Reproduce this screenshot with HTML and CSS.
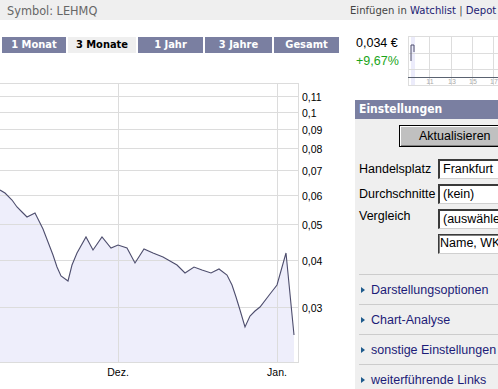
FILE: index.html
```html
<!DOCTYPE html>
<html lang="de">
<head>
<meta charset="utf-8">
<title>LEHMQ Chart</title>
<link rel="stylesheet" href="styles.css">
</head>
<body>
<div class="topbar">
  <div class="sym">Symbol: LEHMQ</div>
  <div class="tools">Einfügen in <a class="lnk">Watchlist</a> | <a class="lnk">Depot</a> | <a class="lnk">Liste</a></div>
</div>
<div class="main">
  <div class="left">
    <div class="tabs">
      <span class="tab t1">1 Monat</span>
      <span class="tab t2 active">3 Monate</span>
      <span class="tab t3">1 Jahr</span>
      <span class="tab t4">3 Jahre</span>
      <span class="tab t5">Gesamt</span>
    </div>
    <svg class="chart" width="340" height="329" viewBox="0 60 340 329" xmlns="http://www.w3.org/2000/svg">
      <polygon class="area" points="0,190 5,193 12,200 17,207 22,212 27,217 35,213 38,219 43,229 48,242 53,255 57,267 61,276 68,281 72,265 77,253 86,237 93,250 102,237 111,248 118,245 127,248 135,263 144,249 153,253 163,257 170,261 177,265 185,273 194,267 202,270 211,273 219,269 227,275 232,285 236,297 240,310 245,327 250,316 255,311 260,307 270,294 277,285 286,253 294,335 294,362 0,362"/>
      <g class="grid">
        <line x1="0" y1="83.5" x2="298" y2="83.5"/>
        <line x1="0" y1="96.5" x2="298" y2="96.5"/>
        <line x1="0" y1="112.5" x2="298" y2="112.5"/>
        <line x1="0" y1="129.5" x2="298" y2="129.5"/>
        <line x1="0" y1="148.5" x2="298" y2="148.5"/>
        <line x1="0" y1="170.5" x2="298" y2="170.5"/>
        <line x1="0" y1="195.5" x2="298" y2="195.5"/>
        <line x1="0" y1="224.5" x2="298" y2="224.5"/>
        <line x1="0" y1="260.5" x2="298" y2="260.5"/>
        <line x1="0" y1="307.5" x2="298" y2="307.5"/>
        <line x1="0" y1="362.5" x2="298" y2="362.5"/>
        <line x1="118.5" y1="83" x2="118.5" y2="363"/>
        <line x1="277.5" y1="83" x2="277.5" y2="363"/>
        <line x1="298.5" y1="83" x2="298.5" y2="363"/>
      </g>
      <polyline class="price" points="0,190 5,193 12,200 17,207 22,212 27,217 35,213 38,219 43,229 48,242 53,255 57,267 61,276 68,281 72,265 77,253 86,237 93,250 102,237 111,248 118,245 127,248 135,263 144,249 153,253 163,257 170,261 177,265 185,273 194,267 202,270 211,273 219,269 227,275 232,285 236,297 240,310 245,327 250,316 255,311 260,307 270,294 277,285 286,253 294,335"/>
      <g class="ylab">
        <text x="302" y="101">0,11</text>
        <text x="302" y="117">0,1</text>
        <text x="302" y="134">0,09</text>
        <text x="302" y="153">0,08</text>
        <text x="302" y="175">0,07</text>
        <text x="302" y="200">0,06</text>
        <text x="302" y="229">0,05</text>
        <text x="302" y="265">0,04</text>
        <text x="302" y="312">0,03</text>
      </g>
      <g class="xlab">
        <text x="118" y="376">Dez.</text>
        <text x="277" y="376">Jan.</text>
      </g>
    </svg>
  </div>
  <div class="right">
    <div class="quote">
      <div class="pricebox">
        <div class="last">0,034 €</div>
        <div class="chg">+9,67%</div>
      </div>
      <svg class="mini" width="100" height="50" viewBox="408 36 100 50" xmlns="http://www.w3.org/2000/svg">
        <rect class="band" x="411" y="37" width="4" height="48"/>
        <g class="mgrid">
          <line x1="408" y1="36.5" x2="508" y2="36.5"/>
          <line x1="408" y1="53.5" x2="508" y2="53.5"/>
          <line x1="408" y1="69.5" x2="508" y2="69.5"/>
          <line x1="408" y1="85.5" x2="508" y2="85.5"/>
          <line x1="408.5" y1="36" x2="408.5" y2="86"/>
          <line x1="429.5" y1="36" x2="429.5" y2="86"/>
          <line x1="451.5" y1="36" x2="451.5" y2="86"/>
          <line x1="472.5" y1="36" x2="472.5" y2="86"/>
          <line x1="493.5" y1="36" x2="493.5" y2="86"/>
        </g>
        <line class="maxis" x1="408" y1="77.5" x2="508" y2="77.5"/>
        <polyline class="mline" points="411,61 411,45 414,45 414,52"/>
        <g class="mlab">
          <text x="430" y="84">11</text>
          <text x="452" y="84">13</text>
          <text x="473" y="84">15</text>
          <text x="494" y="84">17</text>
        </g>
      </svg>
    </div>
    <div class="panel">
      <div class="panel-head">Einstellungen</div>
      <div class="panel-body">
        <div class="btnrow"><span class="btn">Aktualisieren</span></div>
        <div class="form">
          <span class="lbl">Handelsplatz</span><span class="box">Frankfurt</span>
          <span class="lbl">Durchschnitte</span><span class="box">(kein)</span>
          <span class="lbl top">Vergleich</span><span class="box">(auswählen)</span>
          <span class="lbl"></span><span class="box input">Name, WKN</span>
        </div>
        <ul class="links">
          <li class="item"><span class="tri"></span><span class="ltxt">Darstellungsoptionen</span></li>
          <li class="item"><span class="tri"></span><span class="ltxt">Chart-Analyse</span></li>
          <li class="item"><span class="tri"></span><span class="ltxt">sonstige Einstellungen</span></li>
          <li class="item"><span class="tri"></span><span class="ltxt">weiterführende Links</span></li>
        </ul>
      </div>
    </div>
  </div>
</div>
</body>
</html>
```
FILE: styles.css
```css
html, body {
  margin: 0;
  padding: 0;
}
body {
  width: 498px;
  height: 389px;
  overflow: hidden;
  background: #ffffff;
  font-family: "Liberation Sans", Arial, sans-serif;
  color: #000;
}
.topbar {
  display: flex;
  height: 20px;
  background: #efefef;
  font-family: "DejaVu Sans Condensed", "DejaVu Sans", sans-serif;
  font-stretch: condensed;
  white-space: nowrap;
}
.sym {
  flex: none;
  width: 343px;
  padding-left: 7px;
  font-size: 12.6px;
  line-height: 20px;
  padding-top: 1px;
  color: #666;
}
.tools {
  flex: none;
  font-size: 11.2px;
  line-height: 20px;
  padding-top: 1px;
  color: #444;
}
.lnk {
  color: #1c1c72;
  text-decoration: none;
}
.main {
  display: flex;
  align-items: flex-start;
}
.left {
  flex: none;
  width: 355px;
}
.tabs {
  display: flex;
  gap: 2px;
  margin-top: 17px;
  margin-left: 2px;
  height: 16px;
}
.tab {
  flex: none;
  height: 16px;
  line-height: 16px;
  text-align: center;
  background: #7a7fa1;
  color: #fff;
  font-family: "DejaVu Sans Condensed", "DejaVu Sans", sans-serif;
  font-stretch: condensed;
  font-weight: bold;
  font-size: 11px;
}
.tab.active {
  background: #efefef;
  color: #000;
}
.t1 { width: 64px; }
.t2 { width: 68px; }
.t3 { width: 65px; }
.t4 { width: 67px; }
.t5 { width: 65px; }
.chart {
  display: block;
  margin-top: 7px;
}
.area {
  fill: #eeeefb;
  stroke: none;
}
.grid line {
  stroke: #dcdcdc;
  stroke-width: 1;
}
.price {
  fill: none;
  stroke: #4d4d6d;
  stroke-width: 1.1;
}
.ylab text, .xlab text {
  font-family: "Liberation Sans", Arial, sans-serif;
  font-size: 10.5px;
  fill: #000;
}
.xlab text {
  text-anchor: middle;
}
.right {
  flex: none;
  width: 200px;
}
.quote {
  display: flex;
  margin-top: 16px;
  height: 50px;
}
.pricebox {
  flex: none;
  width: 52px;
  padding-left: 1px;
  font-size: 12.5px;
}
.last {
  line-height: 15px;
}
.chg {
  line-height: 15px;
  margin-top: 3px;
  color: #1aa51a;
}
.mini {
  display: block;
  flex: none;
}
.band { fill: #ececfb; }
.mgrid line { stroke: #dddddd; stroke-width: 1; }
.maxis { stroke: #5a6270; stroke-width: 1; }
.mline { fill: none; stroke: #4d4d6d; stroke-width: 1; }
.mlab text {
  font-family: "Liberation Sans", Arial, sans-serif;
  font-size: 7px;
  fill: #aaa;
  text-anchor: middle;
}
.panel {
  margin-top: 14px;
  width: 180px;
}
.panel-head {
  height: 19px;
  line-height: 19px;
  background: #7a7fa1;
  color: #fff;
  padding-left: 4px;
  font-family: "DejaVu Sans Condensed", "DejaVu Sans", sans-serif;
  font-stretch: condensed;
  font-weight: bold;
  font-size: 12px;
}
.panel-body {
  background: #efefef;
  height: 280px;
  padding-top: 6px;
  font-size: 12.5px;
}
.btnrow {
  padding-left: 44px;
}
.btn {
  display: block;
  width: 100px;
  height: 20px;
  line-height: 20px;
  padding-left: 19px;
  background: #c0c0c0;
  border: 1px solid #000;
  box-shadow: inset 1px 1px #ffffff, inset -1px -1px #808080;
  color: #000;
}
.form {
  display: grid;
  grid-template-columns: 79px 110px;
  row-gap: 5px;
  margin-top: 12px;
  padding-left: 4px;
}
.lbl {
  display: flex;
  align-items: center;
  height: 20px;
}
.lbl.top {
  align-items: flex-start;
}
.box {
  box-sizing: border-box;
  height: 20px;
  line-height: 17px;
  background: #fff;
  border-top: 2px solid #3a3a3a;
  border-left: 2px solid #3a3a3a;
  border-right: 1px solid #d0d0d0;
  border-bottom: 1px solid #d0d0d0;
  padding-left: 3px;
  white-space: nowrap;
  overflow: hidden;
}
.box.input {
  padding-left: 1px;
  border-top: 1px solid #3a3a3a;
  border-left: 1px solid #3a3a3a;
  box-shadow: inset 1px 1px #808080;
}
.links {
  list-style: none;
  margin: 20px 0 0 4px;
  padding: 0;
}
.item {
  display: flex;
  align-items: center;
  height: 29px;
  border-top: 1px solid #cccccc;
  padding-left: 2px;
  white-space: nowrap;
}
.tri {
  flex: none;
  width: 0;
  height: 0;
  border-top: 3.5px solid transparent;
  border-bottom: 3.5px solid transparent;
  border-left: 4px solid #1e5a8c;
  margin-right: 6px;
}
.ltxt {
  color: #1c1c78;
}
```
